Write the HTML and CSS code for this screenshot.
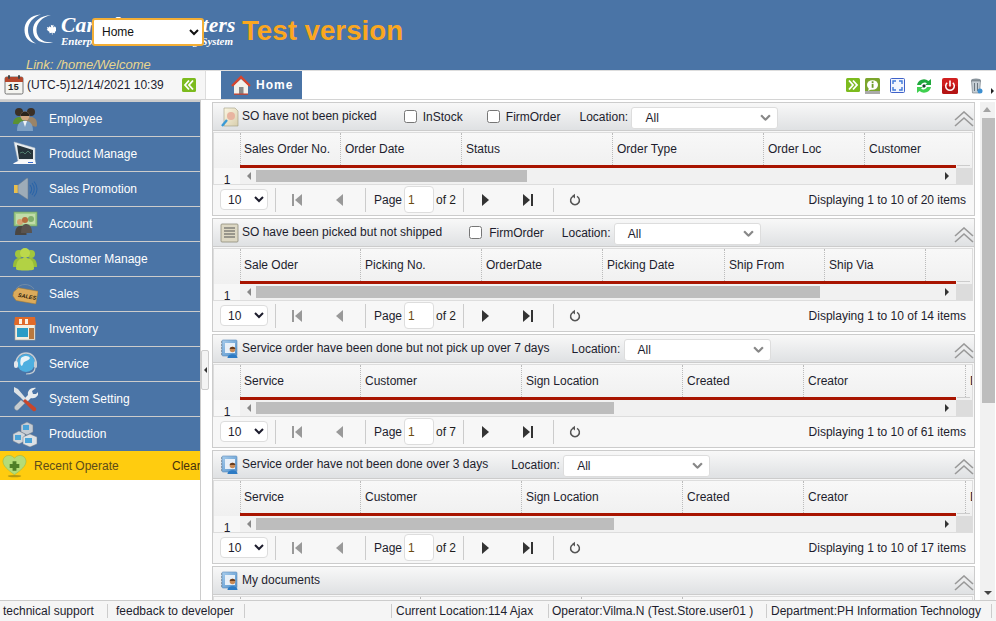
FILE: index.html
```html
<!DOCTYPE html>
<html lang="en">
<head>
<meta charset="utf-8">
<title>Test version</title>
<link rel="stylesheet" href="styles.css">
</head>
<body>
<svg class="defs" width="0" height="0" aria-hidden="true">
  <defs>
    <linearGradient id="gBook" x1="0" y1="0" x2="1" y2="1"><stop offset="0" stop-color="#a9cdec"/><stop offset="1" stop-color="#4f8fca"/></linearGradient>
    <linearGradient id="gPaper" x1="0" y1="0" x2="1" y2="1"><stop offset="0" stop-color="#fbf6e2"/><stop offset="1" stop-color="#d9cfae"/></linearGradient>
    <symbol id="first" viewBox="0 0 12 14"><rect x="1" y="1" width="2" height="12" fill="#999"/><path d="M11 1v12L4 7z" fill="#999"/></symbol>
    <symbol id="prev" viewBox="0 0 12 14"><path d="M9 1v12L2 7z" fill="#999"/></symbol>
    <symbol id="next" viewBox="0 0 12 14"><path d="M3 1v12l7-6z" fill="#333"/></symbol>
    <symbol id="last" viewBox="0 0 12 14"><path d="M1 1v12l7-6z" fill="#333"/><rect x="9" y="1" width="2" height="12" fill="#333"/></symbol>
    <symbol id="reload" viewBox="0 0 12 14"><path d="M4 3.400A4.400 4.400 0 1 0 8 3.400" fill="none" stroke="#555" stroke-width="1.500"/><path d="M6 .8v4.600L3 3z" fill="#555"/></symbol>
    <symbol id="collapse" viewBox="0 0 20 16"><path d="M1 9l9-8 9 8M1 15l9-8 9 8" fill="none" stroke="#999" stroke-width="1.600"/></symbol>
    <symbol id="chev" viewBox="0 0 10 6"><path d="M1 1l4 4 4-4" fill="none" stroke="#888" stroke-width="2"/></symbol>
    <symbol id="bookman" viewBox="0 0 19 20">
      <rect x="2" y="1" width="15" height="16" rx="1" fill="url(#gBook)" stroke="#5c8cba" stroke-width=".6"/>
      <path d="M2 3h-1M2 6h-1M2 9h-1M2 12h-1M2 15h-1" stroke="#567" stroke-width="1"/>
      <rect x="5" y="4" width="10" height="10" fill="#e8f0f8"/>
      <circle cx="12.500" cy="10.500" r="2.800" fill="#c98a55"/><path d="M9.700 10c.2-3 5.400-3 5.600 0z" fill="#6a3d1d"/>
      <path d="M7.500 19c0-5 10-5 10 0z" fill="#2d7bc4"/>
    </symbol>
    <symbol id="doc" viewBox="0 0 19 20">
      <rect x="1" y="1" width="17" height="18" rx="1" fill="#ddd8c4" stroke="#8d8a78" stroke-width=".8"/>
      <path d="M4 5h11M4 8h11M4 11h11M4 14h11" stroke="#555" stroke-width="1.200"/>
    </symbol>
  </defs>
</svg>

<header class="top">
  <div class="brand-row">
    <svg class="logo" viewBox="0 0 34 32" aria-hidden="true">
      <path d="M19 1.500C8 2 2.500 9 2.500 17 2.500 25 8 30 14 30.500 9 28 6 23 6 17 6 10 11 4 19 1.500z" fill="#fff"/>
      <path d="M29 2C18 2.500 11 9 11 17c0 8 6 14 17 13 1.500-.2 2.500-.6 3-1-9 1.500-16.500-3.500-16.500-12C14.500 10 20 4 29 2z" fill="#fff"/>
      <path d="M29 10l1.200 2.400 1.400-.6-.4 2.800 1.800-1.400.5 1.200 2-.3-.7 2 .9.6-2.900 2.300.3 1.200-2.600-.4v2h-.6v-2l-2.600.4.3-1.200-2.900-2.300.9-.6-.7-2 2 .3.5-1.200 1.800 1.400-.4-2.800 1.400.6z" fill="#fff"/>
    </svg>
    <div class="brand">
      <div class="brand-name">Canada Computers</div>
      <div class="brand-sub">Enterprise Resource Planning System</div>
    </div>
    <div class="test">Test version</div>
  </div>
  <div class="link">Link: /home/Welcome</div>
  <select class="nav-select"><option>Home</option></select>
</header>

<div class="toolbar">
  <div class="clock">
    <svg class="cal" viewBox="0 0 20 20" aria-hidden="true">
      <rect x="1" y="2" width="18" height="17" rx="1.500" fill="#f4f4f0" stroke="#555" stroke-width=".8"/>
      <path d="M1 3.500A1.500 1.500 0 0 1 2.500 2h15A1.500 1.500 0 0 1 19 3.500V7H1z" fill="#b5472c"/>
      <rect x="4" y="0" width="2" height="4" rx="1" fill="#444"/><rect x="14" y="0" width="2" height="4" rx="1" fill="#444"/>
    </svg>
    <span class="cal-num">15</span>
    <span class="time">(UTC-5)12/14/2021 10:39</span>
    <svg class="tbtn collapse-left" viewBox="0 0 14 14" aria-hidden="true">
      <rect width="14" height="14" rx="1.500" fill="#7cbb1e"/>
      <path d="M7 2.500L3 7l4 4.500M11 2.500L7 7l4 4.500" fill="none" stroke="#fff" stroke-width="1.800"/>
    </svg>
  </div>
  <div class="tab">
    <svg class="house" viewBox="0 0 20 20" aria-hidden="true">
      <path d="M3 10v9h14v-9L10 4z" fill="#f4f1ea"/>
      <path d="M1 11L10 2l9 9" fill="none" stroke="#d8452e" stroke-width="2.400"/>
      <rect x="8" y="12" width="4.500" height="7" fill="#888"/>
      <rect x="3" y="18.500" width="14" height="1.300" fill="#c8412c"/>
    </svg>
    <span>Home</span>
  </div>
  <div class="tools">
    <svg class="tool t1" viewBox="0 0 14 14" aria-hidden="true"><rect width="14" height="14" rx="1.500" fill="#7cbb1e"/><path d="M3 2.500L7 7l-4 4.500M7 2.500L11 7l-4 4.500" fill="none" stroke="#fff" stroke-width="1.800"/></svg>
    <svg class="tool t2" viewBox="0 0 15 16" aria-hidden="true"><rect width="15" height="15" rx="1.500" fill="#7ba52c"/><rect y="13" width="15" height="3" fill="#aaa"/><ellipse cx="7.500" cy="7" rx="5.500" ry="4.800" fill="#fff"/><path d="M4 10l-1 3 4-2z" fill="#fff"/><rect x="6.700" y="5.800" width="1.800" height="4" fill="#6b9a25"/><rect x="6.700" y="3.300" width="1.800" height="1.700" fill="#6b9a25"/></svg>
    <svg class="tool t3" viewBox="0 0 15 15" aria-hidden="true"><rect x=".5" y=".5" width="14" height="14" rx="1" fill="#f2f5fd" stroke="#3f62c9"/><path d="M3 6V3h3M9 3h3v3M12 9v3H9M6 12H3V9" fill="none" stroke="#3f78d8" stroke-width="1.400"/></svg>
    <svg class="tool t4" viewBox="0 0 16 16" aria-hidden="true"><path d="M1 7a7 7 0 0 1 11.500-4L15 1v6H9l2-1.800A4 4 0 0 0 5 7z" fill="#1fa83c"/><path d="M15 9a7 7 0 0 1-11.500 4L1 15V9h6l-2 1.800A4 4 0 0 0 11 9z" fill="#3fd04f"/><path d="M6 8l2-2 2 2-2 2z" fill="#18402a"/></svg>
    <svg class="tool t5" viewBox="0 0 16 16" aria-hidden="true"><rect width="16" height="16" rx="2" fill="#d01f1f"/><rect y="8" width="16" height="8" rx="2" fill="#b51414"/><path d="M5.200 4.700a4.300 4.300 0 1 0 5.600 0" fill="none" stroke="#fff" stroke-width="1.500"/><rect x="7.200" y="2.500" width="1.600" height="6" fill="#fff"/></svg>
    <svg class="tool t6" viewBox="0 0 13 16" aria-hidden="true"><ellipse cx="6" cy="2.500" rx="5" ry="2" fill="#8a949c"/><path d="M1.500 3l1 12h7l1-12z" fill="#c6ced4" stroke="#6c767e" stroke-width=".6"/><path d="M4.500 5v8M7.500 5v8" stroke="#6c767e"/><circle cx="10" cy="13" r="2.500" fill="#3d8fd0"/></svg>
  </div>
  <span class="more"></span>
</div>

<main class="main">
  <nav class="side">
    <div class="menu">
      <a class="item">
        <svg class="micon" viewBox="0 0 26 26" aria-hidden="true"><circle cx="7" cy="6" r="4" fill="#3b3026"/><circle cx="19" cy="6" r="4" fill="#3b3026"/><path d="M1 18c0-6 4-7 7-7s5 3 5 7z" fill="#5a9132"/><path d="M13 18c0-6 3-7 6-7s6 2 6 7-1 2-12 0z" fill="#9a8468"/><circle cx="13" cy="10" r="4.500" fill="#d1a57f"/><path d="M8.500 10c0-6 9-6 9 0z" fill="#2c241c"/><path d="M5 25c0-9 4-10 8-10s8 1 8 10z" fill="#7da0c4"/><path d="M11 15h4l-2 6z" fill="#eef2f6"/></svg>
        <span>Employee</span>
      </a>
      <a class="item">
        <svg class="micon" viewBox="0 0 26 26" aria-hidden="true"><path d="M2 1l21 6v13H6z" fill="#e8edf0" stroke="#b8c0c6" stroke-width=".5"/><path d="M5 4l16 5v9H7z" fill="#27343a"/><path d="M8 12l3-1 2 2 3-3 3 3" fill="none" stroke="#5d8f7a" stroke-width=".8"/><path d="M2 22l6-3h15l1 4H1z" fill="#fafafa"/><rect x="16" y="21" width="5" height="1" fill="#36c"/></svg>
        <span>Product Manage</span>
      </a>
      <a class="item">
        <svg class="micon" viewBox="0 0 26 26" aria-hidden="true"><rect x="2" y="9" width="4" height="8" fill="#e9bf4d"/><path d="M6 9l9-7a1 1 0 0 1 1 1v20a1 1 0 0 1-1 0l-9-6z" fill="#9eacb8" stroke="#6b7a88" stroke-width=".5"/><path d="M18 9c2 2.500 2 6 0 8.500M20 7c3 3.500 3 8.500 0 12M22 5.500c4 4.500 4 10.500 0 15" fill="none" stroke="#2a64a8" stroke-width="1.100"/></svg>
        <span>Sales Promotion</span>
      </a>
      <a class="item">
        <svg class="micon" viewBox="0 0 26 26" aria-hidden="true"><rect x="2" y="1" width="23" height="14" fill="#9fcb8a" stroke="#6b9a5e" stroke-width=".7"/><rect x="4" y="3" width="19" height="10" fill="#c1dca9"/><circle cx="19" cy="8" r="3" fill="#7fae6c"/><circle cx="8" cy="11" r="3" fill="#d6a070"/><circle cx="13" cy="9" r="3" fill="#b66c3c"/><path d="M3 24c0-9 4-9 5.500-9h2c3 0 4 1 4 9z" fill="#4a4642"/><path d="M9 22c0-9 4-9 5-9s6 0 6 9z" fill="#5a5450"/></svg>
        <span>Account</span>
      </a>
      <a class="item">
        <svg class="micon" viewBox="0 0 26 26" aria-hidden="true"><circle cx="7" cy="8" r="4" fill="#a2c63c"/><circle cx="19" cy="8" r="4" fill="#a2c63c"/><path d="M1 21c0-7 3-9 6-9s6 2 6 9z" fill="#98bd38"/><path d="M13 21c0-7 3-9 6-9s6 2 6 9z" fill="#98bd38"/><circle cx="13" cy="7" r="5" fill="#bcd94b"/><path d="M4 23c0-9 4-11 9-11s9 2 9 11c0 2-18 2-18 0z" fill="#b2d244"/></svg>
        <span>Customer Manage</span>
      </a>
      <a class="item">
        <svg class="micon" viewBox="0 0 26 26" aria-hidden="true"><path d="M4 8C8 2 18 2 22 8" fill="none" stroke="#7f93a8" stroke-width=".7"/><g transform="rotate(10 13 15)"><path d="M1 13l4-5h20v13H5l-4-4z" fill="#dcab5b" stroke="#a67c30" stroke-width=".5"/><text x="6" y="17" class="tag">SALES</text></g></svg>
        <span>Sales</span>
      </a>
      <a class="item">
        <svg class="micon" viewBox="0 0 26 26" aria-hidden="true"><rect x="3" y="8" width="20" height="16" fill="#f2ede0" stroke="#a8a294" stroke-width=".6"/><path d="M3 1h20l1 8H2z" fill="#e06a2a"/><path d="M7 3h3v5H7zM13 3h3v5h-3z" fill="#f8f1e4"/><rect x="5" y="12" width="11" height="9" fill="#2b9cc6"/><rect x="17" y="12" width="5" height="11" fill="#b8783e"/></svg>
        <span>Inventory</span>
      </a>
      <a class="item">
        <svg class="micon" viewBox="0 0 26 26" aria-hidden="true"><circle cx="14" cy="12" r="9" fill="#4dafe0"/><path d="M9 7c4-3 8-2 9 0-2 4-6 2-7 6s-4 1-2-6z" fill="#e8f3f8"/><path d="M4 12a10 10 0 0 1 20 0" fill="none" stroke="#c5ccd2" stroke-width="1.500"/><rect x="2" y="10" width="4" height="7" rx="2" fill="#e4e8ec"/><rect x="22" y="10" width="3" height="7" rx="1.500" fill="#c5ccd2"/><path d="M23 17c0 4-4 6-9 6" fill="none" stroke="#c5ccd2" stroke-width="1.200"/></svg>
        <span>Service</span>
      </a>
      <a class="item">
        <svg class="micon" viewBox="0 0 26 26" aria-hidden="true"><path d="M2 1l4 2 5 6 5 6-2 2-6-6-6-5z" fill="#dde2e6"/><path d="M9 14L3 20c-2 3 2 6 4 3l6-6z" fill="#c4cbd0" stroke="#8a9298" stroke-width=".5"/><path d="M24 2l-4 3 1 3 3 0 3-3c0 5-4 8-8 7l-3 3-3-3 3-3c-1-4 3-8 8-7z" fill="#e8ecef"/><path d="M13 13l11 9c1 2-1 4-3 3l-10-10z" fill="#c8452a"/></svg>
        <span>System Setting</span>
      </a>
      <a class="item">
        <svg class="micon" viewBox="0 0 26 26" aria-hidden="true"><path d="M9 4l6-3 6 3v7l-6 3-6-3z" fill="#c5ccd4" stroke="#727b84" stroke-width=".5"/><rect x="11" y="4" width="6" height="5" fill="#4aa3d8"/><path d="M1 13l6-3 6 3v7l-6 3-6-3z" fill="#d0d6dc" stroke="#727b84" stroke-width=".5"/><rect x="3" y="14" width="6" height="5" fill="#4aa3d8"/><path d="M11 16l7-3 7 3v7l-7 3-7-3z" fill="#dde2e6" stroke="#727b84" stroke-width=".5"/><rect x="13" y="17" width="7" height="5" fill="#4aa3d8"/></svg>
        <span>Production</span>
      </a>
    </div>
    <div class="recent">
      <svg class="heart" viewBox="0 0 26 24" aria-hidden="true"><path d="M13 21C6 16 1 12 1 7c0-3.500 3-6 6-6 3 0 5 1.500 6 3 1-1.500 3-3 6-3 3 0 6 2.500 6 6 0 5-5 9-12 14z" fill="#b4dc78" stroke="#8ab24c" stroke-width=".5"/><path d="M11 7h4v3h3v4h-3v3h-4v-3H8v-4h3z" fill="#4f7f26"/><ellipse cx="13" cy="22.500" rx="7" ry="1.200" fill="#b89a10"/></svg>
      <span class="recent-title">Recent Operate</span>
      <span class="clear">Clear</span>
    </div>
  </nav>
  <button class="splitter" type="button" aria-label="Collapse"><i></i></button>

  <div class="content">
    <section class="panel">
      <div class="phead">
        <svg class="picon" viewBox="0 0 19 20" aria-hidden="true"><path d="M4 1h11l3 3v15H4z" fill="url(#gPaper)" stroke="#a09a80" stroke-width=".6"/><circle cx="11" cy="9" r="4" fill="#e8b4a0"/><path d="M2 19l5-6" stroke="#3a9ad6" stroke-width="2.400"/></svg>
        <span class="ptitle">SO have not been picked</span>
        <label class="chk c1"><input type="checkbox">InStock</label>
        <label class="chk c2"><input type="checkbox">FirmOrder</label>
        <span class="loc l0">Location:</span>
        <div class="combo"><span>All</span><svg viewBox="0 0 10 6" aria-hidden="true"><use href="#chev"/></svg></div>
        <svg class="coll" viewBox="0 0 20 16" aria-hidden="true"><use href="#collapse"/></svg>
      </div>
      <div class="grid">
        <div class="ghead">
          <div class="gcol w100">Sales Order No.</div><div class="gcol w121">Order Date</div><div class="gcol w151">Status</div><div class="gcol w151">Order Type</div><div class="gcol w101">Order Loc</div><div class="gcol w92">Customer</div>
        </div>
        <div class="gbody">
          <span class="rn">1</span>
          <div class="hbar"><i class="la"></i><b class="thumb t271"></b><i class="ra"></i></div>
          <div class="corner"></div>
        </div>
      </div>
      <div class="pager">
        <select class="psize"><option>10</option></select><span class="sep"></span>
        <span class="pb"><svg viewBox="0 0 12 14" aria-hidden="true"><use href="#first"/></svg></span><span class="pb"><svg viewBox="0 0 12 14" aria-hidden="true"><use href="#prev"/></svg></span><span class="sep s3"></span>
        <span class="pl">Page</span><input class="pinput" value="1" aria-label="Page"><span class="pof">of 2</span><span class="sep s4"></span>
        <span class="pb"><svg viewBox="0 0 12 14" aria-hidden="true"><use href="#next"/></svg></span><span class="pb"><svg viewBox="0 0 12 14" aria-hidden="true"><use href="#last"/></svg></span><span class="sep s5"></span>
        <span class="pb rb"><svg viewBox="0 0 12 14" aria-hidden="true"><use href="#reload"/></svg></span>
        <span class="pinfo">Displaying 1 to 10 of 20 items</span>
      </div>
    </section>

    <section class="panel">
      <div class="phead">
        <svg class="picon" viewBox="0 0 19 20" aria-hidden="true"><use href="#doc"/></svg>
        <span class="ptitle">SO have been picked but not shipped</span>
        <label class="chk c3"><input type="checkbox">FirmOrder</label>
        <span class="loc l1">Location:</span>
        <div class="combo"><span>All</span><svg viewBox="0 0 10 6" aria-hidden="true"><use href="#chev"/></svg></div>
        <svg class="coll" viewBox="0 0 20 16" aria-hidden="true"><use href="#collapse"/></svg>
      </div>
      <div class="grid">
        <div class="ghead">
          <div class="gcol w120">Sale Oder</div><div class="gcol w121">Picking No.</div><div class="gcol w121">OrderDate</div><div class="gcol w122">Picking Date</div><div class="gcol w100">Ship From</div><div class="gcol w101">Ship Via</div><div class="gcol w47"></div>
        </div>
        <div class="gbody">
          <span class="rn">1</span>
          <div class="hbar"><i class="la"></i><b class="thumb t564"></b><i class="ra"></i></div>
          <div class="corner"></div>
        </div>
      </div>
      <div class="pager">
        <select class="psize"><option>10</option></select><span class="sep"></span>
        <span class="pb"><svg viewBox="0 0 12 14" aria-hidden="true"><use href="#first"/></svg></span><span class="pb"><svg viewBox="0 0 12 14" aria-hidden="true"><use href="#prev"/></svg></span><span class="sep s3"></span>
        <span class="pl">Page</span><input class="pinput" value="1" aria-label="Page"><span class="pof">of 2</span><span class="sep s4"></span>
        <span class="pb"><svg viewBox="0 0 12 14" aria-hidden="true"><use href="#next"/></svg></span><span class="pb"><svg viewBox="0 0 12 14" aria-hidden="true"><use href="#last"/></svg></span><span class="sep s5"></span>
        <span class="pb rb"><svg viewBox="0 0 12 14" aria-hidden="true"><use href="#reload"/></svg></span>
        <span class="pinfo">Displaying 1 to 10 of 14 items</span>
      </div>
    </section>

    <section class="panel">
      <div class="phead">
        <svg class="picon" viewBox="0 0 19 20" aria-hidden="true"><use href="#bookman"/></svg>
        <span class="ptitle">Service order have been done but not pick up over 7 days</span>
        <span class="loc l3">Location:</span>
        <div class="combo"><span>All</span><svg viewBox="0 0 10 6" aria-hidden="true"><use href="#chev"/></svg></div>
        <svg class="coll" viewBox="0 0 20 16" aria-hidden="true"><use href="#collapse"/></svg>
      </div>
      <div class="grid">
        <div class="ghead">
          <div class="gcol w120">Service</div><div class="gcol w161">Customer</div><div class="gcol w161">Sign Location</div><div class="gcol w121">Created</div><div class="gcol w162">Creator</div><div class="gcol w7">D</div>
        </div>
        <div class="gbody">
          <span class="rn">1</span>
          <div class="hbar"><i class="la"></i><b class="thumb t358"></b><i class="ra"></i></div>
          <div class="corner"></div>
        </div>
      </div>
      <div class="pager">
        <select class="psize"><option>10</option></select><span class="sep"></span>
        <span class="pb"><svg viewBox="0 0 12 14" aria-hidden="true"><use href="#first"/></svg></span><span class="pb"><svg viewBox="0 0 12 14" aria-hidden="true"><use href="#prev"/></svg></span><span class="sep s3"></span>
        <span class="pl">Page</span><input class="pinput" value="1" aria-label="Page"><span class="pof">of 7</span><span class="sep s4"></span>
        <span class="pb"><svg viewBox="0 0 12 14" aria-hidden="true"><use href="#next"/></svg></span><span class="pb"><svg viewBox="0 0 12 14" aria-hidden="true"><use href="#last"/></svg></span><span class="sep s5"></span>
        <span class="pb rb"><svg viewBox="0 0 12 14" aria-hidden="true"><use href="#reload"/></svg></span>
        <span class="pinfo">Displaying 1 to 10 of 61 items</span>
      </div>
    </section>

    <section class="panel">
      <div class="phead">
        <svg class="picon" viewBox="0 0 19 20" aria-hidden="true"><use href="#bookman"/></svg>
        <span class="ptitle">Service order have not been done over 3 days</span>
        <span class="loc l4">Location:</span>
        <div class="combo"><span>All</span><svg viewBox="0 0 10 6" aria-hidden="true"><use href="#chev"/></svg></div>
        <svg class="coll" viewBox="0 0 20 16" aria-hidden="true"><use href="#collapse"/></svg>
      </div>
      <div class="grid">
        <div class="ghead">
          <div class="gcol w120">Service</div><div class="gcol w161">Customer</div><div class="gcol w161">Sign Location</div><div class="gcol w121">Created</div><div class="gcol w162">Creator</div><div class="gcol w7">D</div>
        </div>
        <div class="gbody">
          <span class="rn">1</span>
          <div class="hbar"><i class="la"></i><b class="thumb t358"></b><i class="ra"></i></div>
          <div class="corner"></div>
        </div>
      </div>
      <div class="pager">
        <select class="psize"><option>10</option></select><span class="sep"></span>
        <span class="pb"><svg viewBox="0 0 12 14" aria-hidden="true"><use href="#first"/></svg></span><span class="pb"><svg viewBox="0 0 12 14" aria-hidden="true"><use href="#prev"/></svg></span><span class="sep s3"></span>
        <span class="pl">Page</span><input class="pinput" value="1" aria-label="Page"><span class="pof">of 2</span><span class="sep s4"></span>
        <span class="pb"><svg viewBox="0 0 12 14" aria-hidden="true"><use href="#next"/></svg></span><span class="pb"><svg viewBox="0 0 12 14" aria-hidden="true"><use href="#last"/></svg></span><span class="sep s5"></span>
        <span class="pb rb"><svg viewBox="0 0 12 14" aria-hidden="true"><use href="#reload"/></svg></span>
        <span class="pinfo">Displaying 1 to 10 of 17 items</span>
      </div>
    </section>

    <section class="panel">
      <div class="phead">
        <svg class="picon" viewBox="0 0 19 20" aria-hidden="true"><use href="#bookman"/></svg>
        <span class="ptitle">My documents</span>
        <svg class="coll" viewBox="0 0 20 16" aria-hidden="true"><use href="#collapse"/></svg>
      </div>
      <div class="grid">
        <div class="ghead">
          <div class="gcol w180"></div><div class="gcol w161"></div><div class="gcol w101"></div><div class="gcol w281"></div>
        </div>
      </div>
    </section>
  </div>

  <div class="vscroll" aria-hidden="true">
    <i class="up"></i>
    <b class="vthumb"></b>
    <i class="down"></i>
  </div>
</main>

<footer class="status">
  <span class="st s-tech">technical support</span>
  <span class="st s-feed">feedback to developer</span>
  <span class="st s-loc">Current Location:114 Ajax</span>
  <span class="st s-op">Operator:Vilma.N (Test.Store.user01 )</span>
  <span class="st s-dep">Department:PH Information Technology</span>
</footer>
</body>
</html>
```

FILE: styles.css
```css
* { box-sizing: border-box; }
html, body { height: 100%; }
body {
  margin: 0;
  height: 621px;
  overflow: hidden;
  display: flex;
  flex-direction: column;
  background: #fff;
  color: #1d1d1d;
  font: 12px/16px "Liberation Sans", Arial, sans-serif;
}
.defs { position: absolute; }

/* header */
.top {
  position: relative;
  height: 70px;
  flex: none;
  overflow: hidden;
  background: #4a74a6;
  padding: 13px 0 0 22px;
}
.brand-row { display: flex; height: 44px; }
.logo { width: 34px; height: 32px; flex: none; margin-right: 5px; }
.brand { width: 181px; flex: none; color: #fff; font-family: "Liberation Serif", serif; font-style: italic; font-weight: bold; }
.brand-name { font-size: 21.500px; line-height: 24px; white-space: nowrap; letter-spacing: .2px; }
.brand-sub { font-size: 11px; line-height: 11px; white-space: nowrap; margin-top: -1px; }
.test { font-size: 27.700px; line-height: 36px; font-weight: bold; color: #fba71f; white-space: nowrap; }
.link { margin: 0 0 0 4px; font-size: 13px; font-style: italic; line-height: 16px; color: #e9d68e; }
.nav-select {
  position: absolute;
  left: 92px;
  top: 18px;
  width: 112px;
  height: 28px;
  padding-left: 4px;
  border: 2px solid #f3ae35;
  border-radius: 3px;
  background: #fff;
  color: #111;
  font: 12px "Liberation Sans", sans-serif;
}

/* toolbar */
.toolbar {
  display: flex;
  height: 30px;
  flex: none;
  position: relative;
  background: #fff;
  border-top: 1px solid #ddd;
  border-bottom: 1px solid #d4d4d4;
}
.clock {
  width: 206px;
  flex: none;
  position: relative;
  display: flex;
  align-items: center;
  padding-left: 4px;
  background: #f6f6f6;
  border-right: 1px solid #ddd;
}
.cal { width: 20px; height: 20px; flex: none; }
.cal-num { position: absolute; left: 8px; top: 12px; font: bold 9px/10px "Liberation Mono", monospace; color: #222; }
.time { margin-left: 3px; color: #1d1d30; white-space: nowrap; }
.collapse-left { width: 14px; height: 14px; margin-left: 18px; flex: none; }
.tab {
  margin-left: 15px;
  width: 81px;
  display: flex;
  align-items: center;
  padding-left: 10px;
  background: #4a74a6;
  color: #fff;
  font-weight: bold;
  letter-spacing: 1px;
}
.house { width: 20px; height: 20px; margin-right: 5px; }
.tools { position: absolute; left: 0; top: 0; width: 0; height: 0; }
.tool { position: absolute; }
.t1 { left: 846px; top: 7px; width: 14px; height: 14px; }
.t2 { left: 865px; top: 7px; width: 15px; height: 16px; }
.t3 { left: 890px; top: 7px; width: 15px; height: 15px; }
.t4 { left: 916px; top: 7px; width: 16px; height: 16px; }
.t5 { left: 942px; top: 7px; width: 16px; height: 16px; }
.t6 { left: 970px; top: 7px; width: 13px; height: 16px; }
.more { position: absolute; left: 991px; top: 17px; border-left: 3px solid #222; border-top: 3px solid transparent; border-bottom: 3px solid transparent; }

/* main area */
.main { flex: 1; min-height: 0; display: flex; position: relative; overflow: hidden; }
.side {
  width: 201px;
  flex: none;
  border-top: 2px solid #ccc;
  border-right: 1px solid #ccc;
}
.item {
  display: flex;
  align-items: center;
  height: 35px;
  padding-left: 12px;
  background: #4a74a6;
  border-bottom: 1px solid #ccc;
  color: #fff;
}
.item:last-child { border-bottom: 0; height: 34px; }
.micon { width: 26px; height: 26px; flex: none; margin-right: 11px; }
.tag { font: italic bold 5.500px "Liberation Sans", sans-serif; fill: #1f1608; }
.recent {
  display: flex;
  align-items: center;
  height: 29px;
  background: #ffcc0f;
  color: #5c4b1a;
  padding-left: 2px;
  overflow: hidden;
  white-space: nowrap;
}
.heart { width: 25px; height: 24px; flex: none; margin-right: 7px; }
.recent-title { width: 138px; flex: none; }
.clear { color: #47300c; }
.splitter {
  position: absolute;
  left: 201px;
  top: 250px;
  width: 8px;
  height: 40px;
  padding: 0;
  background: #f4f4f4;
  border: 1px solid #ccc;
  border-radius: 2px;
}
.splitter i { display: block; margin-left: 2px; border-right: 3px solid #333; border-top: 3px solid transparent; border-bottom: 3px solid transparent; width: 0; }

/* content */
.content {
  margin-left: 11px;
  width: 763px;
  flex: none;
  padding-top: 2px;
  overflow: hidden;
  display: flex;
  flex-direction: column;
  gap: 2px;
}
.panel { flex: none; height: 114px; border: 1px solid #ccc; background: #f7f7f7; }
.phead {
  height: 28px;
  display: flex;
  align-items: center;
  padding-left: 7px;
  background: linear-gradient(#f8f8f8, #dfe1e3);
  border-bottom: 1px solid #ccc;
  color: #1d1d2d;
  white-space: nowrap;
}
.picon { width: 19px; height: 20px; flex: none; margin-right: 3px; }
.ptitle { margin-top: -1px; }
.chk { display: flex; align-items: center; color: #1d1d2d; }
.chk input { width: 13px; height: 13px; margin: 0 6px 0 0; }
.c1 { margin-left: 27px; }
.c2 { margin-left: 24px; }
.c3 { margin-left: 27px; }
.c3 input { margin-right: 7px; }
.loc { width: 52px; flex: none; }
.l0 { margin-left: 19px; }
.l1 { margin-left: 18px; }
.l3 { margin-left: 22px; }
.l4 { margin-left: 23px; }
.combo {
  width: 147px;
  height: 22px;
  display: flex;
  align-items: center;
  justify-content: space-between;
  padding: 0 6px 0 13px;
  background: #fff;
  border: 1px solid #ddd;
  border-radius: 3px;
  margin-top: 2px;
}
.combo svg { width: 11px; height: 7px; }
.coll { width: 20px; height: 16px; margin-left: auto; flex: none; margin-top: 5px; }
.grid {
  margin: 1px 1px 0 0;
  border: 1px solid #ddd;
  background: #f7f7f7;
}
.ghead {
  position: relative;
  height: 35px;
  display: flex;
  padding-left: 26px;
  background: linear-gradient(#f8f8f8, #f0f0f0);
  overflow: hidden;
}
.ghead::after {
  content: "";
  position: absolute;
  left: 26px;
  bottom: 0;
  width: 716px;
  height: 3px;
  background: #a81400;
}
.ghead::before {
  content: "";
  position: absolute;
  left: 743px;
  bottom: 2px;
  width: 13px;
  height: 1px;
  background: #ccc;
}
.gcol {
  flex: none;
  height: 32px;
  padding: 8px 0 0 4px;
  border-left: 1px dotted #bbb;
  color: #1d1d2d;
  white-space: nowrap;
  overflow: hidden;
}
.gcol:first-child { padding-left: 3px; }
.w7 { width: 8px; }
.w47 { width: 47px; }
.w92 { width: 93px; }
.w100 { width: 100px; }
.w101 { width: 101px; }
.w120 { width: 120px; }
.w121 { width: 121px; }
.w122 { width: 122px; }
.w151 { width: 151px; }
.w161 { width: 161px; }
.w162 { width: 162px; }
.w180 { width: 180px; }
.w281 { width: 281px; }
.gbody { height: 16px; display: flex; position: relative; overflow: hidden; }
.rn { width: 26px; flex: none; text-align: center; padding-top: 4px; color: #1d1d2d; line-height: 16px; }
.hbar {
  width: 716px;
  flex: none;
  display: flex;
  align-items: center;
  padding: 0 7px;
  background: #f1f1f1;
  position: relative;
}
.la { width: 0; border-right: 4px solid #888; border-top: 4px solid transparent; border-bottom: 4px solid transparent; }
.ra { position: absolute; left: 705px; border-left: 4px solid #333; border-top: 4px solid transparent; border-bottom: 4px solid transparent; }
.thumb { display: block; height: 12px; margin-left: 5px; background: #bdbdbd; }
.t271 { width: 271px; }
.t564 { width: 564px; }
.t358 { width: 358px; }
.corner { flex: 1; background: #dcdcdc; }
.pager {
  height: 30px;
  display: flex;
  align-items: center;
  padding: 0 0 1px 7px;
  background: #f7f7f7;
}
.psize {
  width: 48px;
  height: 21px;
  padding-left: 3px;
  border: 1px solid #ddd;
  border-radius: 4px;
  background: #fff;
  color: #1d1d2d;
  font: 12px "Liberation Sans", sans-serif;
}
.sep { width: 1px; height: 24px; background: #ccc; flex: none; margin-left: 7px; }
.pb { width: 43px; flex: none; display: flex; justify-content: center; padding-right: 1px; }
.pb svg { width: 12px; height: 14px; }
.s3 { margin-left: 3px; }
.pl { margin-left: 8px; color: #1d1d2d; }
.pinput {
  width: 30px;
  height: 27px;
  margin-left: 2px;
  padding: 0 0 0 3px;
  border: 1px solid #ddd;
  border-radius: 4px;
  background: #fff;
  color: #6b4a10;
  font: 12px "Liberation Sans", sans-serif;
}
.pof { margin-left: 2px; width: 20px; }
.s4 { margin-left: 7px; }
.s5 { margin-left: 3px; }
.rb { width: 43px; }
.pinfo { margin-left: auto; padding-right: 8px; color: #1d1d2d; white-space: nowrap; }

/* page scrollbar */
.vscroll {
  margin-left: 5px;
  width: 15px;
  flex: none;
  position: relative;
  background: #f1f1f1;
  margin-top: 2px;
}
.up { position: absolute; left: 3px; top: 5px; border-bottom: 5px solid #a3a3a3; border-left: 4px solid transparent; border-right: 4px solid transparent; }
.down { position: absolute; left: 4px; bottom: 5px; border-top: 4px solid #444; border-left: 4px solid transparent; border-right: 4px solid transparent; }
.vthumb { position: absolute; left: 2px; top: 16px; width: 13px; height: 285px; background: #bdbdbd; }

/* footer */
.status {
  position: relative;
  height: 21px;
  flex: none;
  display: flex;
  align-items: center;
  background: #f5f5f5;
  border-top: 1px solid #ccc;
  color: #1d1d2d;
  white-space: nowrap;
}
.st { display: block; height: 14px; line-height: 14px; border-right: 1px solid #ccc; padding-left: 3px; flex: none; }
.s-tech { width: 108px; }
.s-feed { width: 137px; padding-left: 8px; }
.s-loc { margin-left: 146px; width: 158px; padding-left: 4px; border-left: 1px solid #ccc; }
.s-op { width: 218px; padding-left: 3px; }
.s-dep { width: 225px; padding-left: 4px; }
```
